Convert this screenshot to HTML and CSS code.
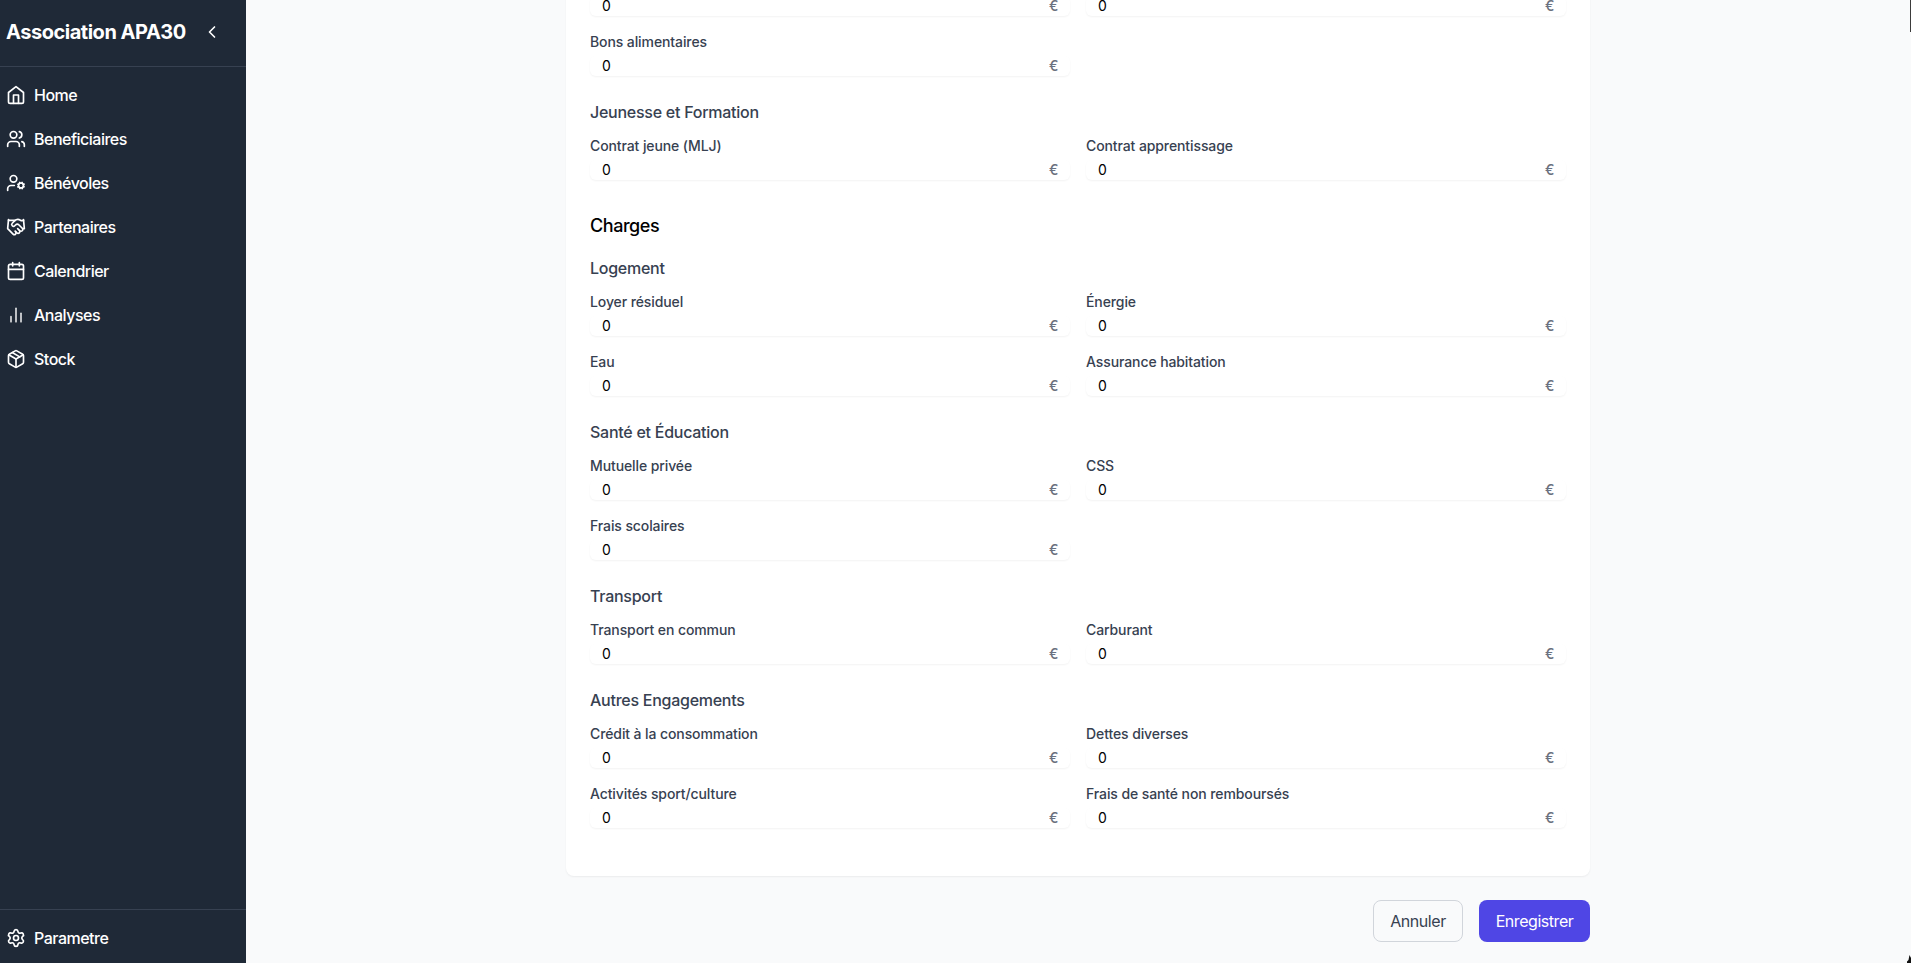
FILE: index.html
```html
<!DOCTYPE html>
<html lang="fr">
<head>
<meta charset="utf-8">
<title>Association APA30</title>
<link rel="stylesheet" href="styles.css">
</head>
<body>
<div class="app">
  <aside class="sidebar">
    <div class="brand">
      <h1 class="brand-name">Association APA30</h1>
      <svg class="icon" viewBox="0 0 24 24"><path d="m15 18-6-6 6-6"/></svg>
    </div>
    <nav class="nav">
      <a class="nav-item"><svg class="icon" viewBox="0 0 24 24"><path d="m3 9 9-7 9 7v11a2 2 0 0 1-2 2H5a2 2 0 0 1-2-2z"/><path d="M9 22V12h6v10"/></svg><span>Home</span></a>
      <a class="nav-item"><svg class="icon" viewBox="0 0 24 24"><path d="M16 21v-2a4 4 0 0 0-4-4H6a4 4 0 0 0-4 4v2"/><circle cx="9" cy="7" r="4"/><path d="M22 21v-2a4 4 0 0 0-3-3.87"/><path d="M16 3.13a4 4 0 0 1 0 7.75"/></svg><span>Beneficiaires</span></a>
      <a class="nav-item"><svg class="icon" viewBox="0 0 24 24"><circle cx="18" cy="15" r="3"/><circle cx="9" cy="7" r="4"/><path d="M10 15H6a4 4 0 0 0-4 4v2"/><path d="m21.7 16.4-.9-.3"/><path d="m15.2 13.9-.9-.3"/><path d="m16.6 18.7.3-.9"/><path d="m19.1 12.2.3-.9"/><path d="m19.6 18.7-.4-1"/><path d="m16.8 12.3-.4-1"/><path d="m14.3 16.6 1-.4"/><path d="m20.7 13.8 1-.4"/></svg><span>Bénévoles</span></a>
      <a class="nav-item"><svg class="icon" viewBox="0 0 24 24"><path d="m11 17 2 2a1 1 0 1 0 3-3"/><path d="m14 14 2.5 2.5a1 1 0 1 0 3-3l-3.88-3.88a3 3 0 0 0-4.24 0l-.88.88a1 1 0 1 1-3-3l2.81-2.81a5.79 5.79 0 0 1 7.06-.87l.47.28a2 2 0 0 0 1.42.25L21 4"/><path d="m21 3 1 11h-2"/><path d="M3 3 2 14l6.5 6.5a1 1 0 1 0 3-3"/><path d="M3 4h8"/></svg><span>Partenaires</span></a>
      <a class="nav-item"><svg class="icon" viewBox="0 0 24 24"><path d="M8 2v4"/><path d="M16 2v4"/><rect width="18" height="18" x="3" y="4" rx="2"/><path d="M3 10h18"/></svg><span>Calendrier</span></a>
      <a class="nav-item"><svg class="icon icon-soft" viewBox="0 0 24 24"><path d="M18 20V10"/><path d="M12 20V4"/><path d="M6 20v-6"/></svg><span>Analyses</span></a>
      <a class="nav-item"><svg class="icon" viewBox="0 0 24 24"><path d="m7.5 4.27 9 5.15"/><path d="M21 8a2 2 0 0 0-1-1.73l-7-4a2 2 0 0 0-2 0l-7 4A2 2 0 0 0 3 8v8a2 2 0 0 0 1 1.73l7 4a2 2 0 0 0 2 0l7-4A2 2 0 0 0 21 16Z"/><path d="m3.3 7 8.7 5 8.7-5"/><path d="M12 22V12"/></svg><span>Stock</span></a>
    </nav>
    <div class="side-foot">
      <a class="nav-item"><svg class="icon" viewBox="0 0 24 24"><path d="M9.671 4.136a2.34 2.34 0 0 1 4.659 0 2.34 2.34 0 0 0 3.319 1.915 2.34 2.34 0 0 1 2.33 4.033 2.34 2.34 0 0 0 0 3.831 2.34 2.34 0 0 1-2.33 4.033 2.34 2.34 0 0 0-3.319 1.915 2.34 2.34 0 0 1-4.659 0 2.34 2.34 0 0 0-3.32-1.915 2.34 2.34 0 0 1-2.33-4.033 2.34 2.34 0 0 0 0-3.831A2.34 2.34 0 0 1 6.35 6.051a2.34 2.34 0 0 0 3.319-1.915"/><circle cx="12" cy="12" r="3"/></svg><span>Parametre</span></a>
    </div>
  </aside>
  <main class="main">
    <div class="content">
      <div class="card">
        <div class="grid group">
          <div class="input"><span>0</span><span class="unit">€</span></div>
          <div class="input"><span>0</span><span class="unit">€</span></div>
          <div class="field"><label>Bons alimentaires</label><div class="input"><span>0</span><span class="unit">€</span></div></div>
        </div>
        <h4>Jeunesse et Formation</h4>
        <div class="grid group last">
          <div class="field"><label>Contrat jeune (MLJ)</label><div class="input"><span>0</span><span class="unit">€</span></div></div>
          <div class="field"><label>Contrat apprentissage</label><div class="input"><span>0</span><span class="unit">€</span></div></div>
        </div>
        <h3>Charges</h3>
        <h4>Logement</h4>
        <div class="grid group">
          <div class="field"><label>Loyer résiduel</label><div class="input"><span>0</span><span class="unit">€</span></div></div>
          <div class="field"><label>Énergie</label><div class="input"><span>0</span><span class="unit">€</span></div></div>
          <div class="field"><label>Eau</label><div class="input"><span>0</span><span class="unit">€</span></div></div>
          <div class="field"><label>Assurance habitation</label><div class="input"><span>0</span><span class="unit">€</span></div></div>
        </div>
        <h4>Santé et Éducation</h4>
        <div class="grid group">
          <div class="field"><label>Mutuelle privée</label><div class="input"><span>0</span><span class="unit">€</span></div></div>
          <div class="field"><label>CSS</label><div class="input"><span>0</span><span class="unit">€</span></div></div>
          <div class="field"><label>Frais scolaires</label><div class="input"><span>0</span><span class="unit">€</span></div></div>
        </div>
        <h4>Transport</h4>
        <div class="grid group">
          <div class="field"><label>Transport en commun</label><div class="input"><span>0</span><span class="unit">€</span></div></div>
          <div class="field"><label>Carburant</label><div class="input"><span>0</span><span class="unit">€</span></div></div>
        </div>
        <h4>Autres Engagements</h4>
        <div class="grid group">
          <div class="field"><label>Crédit à la consommation</label><div class="input"><span>0</span><span class="unit">€</span></div></div>
          <div class="field"><label>Dettes diverses</label><div class="input"><span>0</span><span class="unit">€</span></div></div>
          <div class="field"><label>Activités sport/culture</label><div class="input"><span>0</span><span class="unit">€</span></div></div>
          <div class="field"><label>Frais de santé non remboursés</label><div class="input"><span>0</span><span class="unit">€</span></div></div>
        </div>
      </div>
      <div class="actions">
        <button class="btn btn-cancel">Annuler</button>
        <button class="btn btn-save">Enregistrer</button>
      </div>
    </div>
    <div class="scroll-thumb"></div>
    <svg class="pointer" viewBox="0 0 4 8"><path d="M2.5 0 4 3v5H0V6.500L1.500 5z"/></svg>
  </main>
</div>
</body>
</html>
```
FILE: styles.css
```css
* { box-sizing: border-box; margin: 0; }
body { font-family: Inter, "Liberation Sans", sans-serif; font-size: 16px; line-height: 24px; color: #000; background: #f9fafb; }
.app { display: flex; height: 963px; overflow: hidden; }
.sidebar { display: flex; flex-direction: column; flex: none; width: 246px; background: #1f2937; color: #fff; }
.brand { display: flex; align-items: center; justify-content: space-between; height: 67px; padding: 0 24px 3px 6px; border-bottom: 1px solid #374151; }
.brand-name { font-size: 20px; line-height: 28px; font-weight: 700; letter-spacing: -0.48px; white-space: nowrap; }
.icon { flex: none; width: 20px; height: 20px; fill: none; stroke: currentColor; stroke-width: 2; stroke-linecap: round; stroke-linejoin: round; }
.icon-soft { opacity: .85; }
.nav { flex: 1; padding-top: 8px; }
.nav-item { display: flex; align-items: center; gap: 8px; height: 40px; margin-bottom: 4px; padding-left: 6px; letter-spacing: -0.5px; font-weight: 450; }
.side-foot { height: 54px; padding-top: 8px; border-top: 1px solid #374151; }
.main { position: relative; flex: 1; display: flex; flex-direction: column; justify-content: flex-end; align-items: center; padding-bottom: 21px; background: #f9fafb; }
.content { width: 1024px; margin-left: -1px; }
.card { padding: 0 24px 24px; background: #fff; border-radius: 0 0 8px 8px; box-shadow: 0 1px 2px rgba(0,0,0,.06); }
.grid { display: grid; grid-template-columns: 1fr 1fr; gap: 16px; }
.group { padding-bottom: 24px; }
.last { padding-bottom: 32px; }
h3 { margin-bottom: 16px; font-size: 18px; line-height: 28px; font-weight: 500; letter-spacing: -0.45px; }
h4 { margin-bottom: 12px; font-size: 16px; line-height: 24px; font-weight: 500; letter-spacing: -0.26px; color: #374151; }
label { display: block; margin-bottom: 4px; font-size: 14px; line-height: 20px; font-weight: 500; letter-spacing: -0.1px; color: #374151; }
.input { display: flex; justify-content: space-between; height: 20px; padding: 0 11.500px 0 12px; font-size: 14px; line-height: 20px; border-radius: 6px; box-shadow: 0 1px 2px rgba(0,0,0,.05); }
.unit { color: #6b7280; font-weight: 500; }
.actions { display: flex; justify-content: flex-end; gap: 16px; margin-top: 24px; }
.btn { height: 42px; border: 1px solid transparent; border-radius: 8px; font: inherit; letter-spacing: -0.45px; }
.btn-cancel { width: 90px; padding: 0; background: transparent; border-color: #d1d5db; color: #374151; }
.btn-save { width: 111px; padding: 0; background: #4f46e5; color: #fff; }
.scroll-thumb { position: absolute; top: 0; right: 0; width: 1px; height: 32px; background: #3b3b3b; }
.pointer { position: absolute; right: 0; bottom: 0; width: 4px; height: 8px; fill: #111; }
```
